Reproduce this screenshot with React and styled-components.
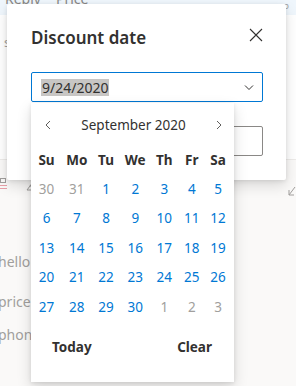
import React from 'react'
import styled, { createGlobalStyle } from 'styled-components'

const GlobalStyle = createGlobalStyle`
    html, body {
        margin: 0;
        padding: 0;
        background: #ffffff;
    }
    body {
        font-family: 'Noto Sans', 'Open Sans', sans-serif;
        color: #323130;
    }
`;

const Page = styled.div`
    position: relative;
    width: 296px;
    height: 386px;
    overflow: hidden;
    background: #ffffff;
`;

const TopBar = styled.div`
    height: 15px;
    background: #eff6fc;
    display: flex;
    justify-content: space-between;
    padding: 0 6px 0 5px;
    color: #8a8886;
    overflow: hidden;

    .left {
        display: flex;
        gap: 15px;
        font-size: 14px;
        line-height: 14px;
        margin-top: -8px;
    }
    .dots {
        margin-top: 1px;
        font-size: 9px;
        line-height: 9px;
        letter-spacing: 1px;
        color: #a19f9d;
    }
`;

const WhiteArea = styled.div`
    height: 145px;
    box-sizing: border-box;
    border-bottom: 1px solid #edebe9;
    color: #a19f9d;
    font-size: 13px;
    padding: 18px 0 0 4px;
`;

const GreyArea = styled.div`
    background: #faf9f8;
    height: 226px;
    padding-top: 12px;
    box-sizing: border-box;
`;

const ToolRow = styled.div`
    display: flex;
    justify-content: space-between;
    align-items: center;
    height: 24px;
`;

const ToolGroup = styled.div`
    display: flex;
    align-items: center;
    gap: 18px;
`;

const ListText = styled.div`
    font-size: 14px;
    color: #a19f9d;
    margin-left: -2px;
    height: 20px;
    line-height: 20px;
    margin-top: ${p => p.gap}px;
`;

const Dialog = styled.div`
    position: absolute;
    left: 7px;
    top: 4px;
    width: 279px;
    height: 176px;
    background: #ffffff;
    border-radius: 2px;
    box-shadow: 0 6px 14px rgba(0, 0, 0, 0.13), 0 1px 4px rgba(0, 0, 0, 0.1);
    padding: 19px 23px 0 24px;
    box-sizing: border-box;
`;

const DialogHeader = styled.div`
    display: flex;
    justify-content: space-between;
    align-items: center;
    height: 28px;
`;

const Title = styled.h1`
    margin: 0;
    font-size: 17px;
    font-weight: 600;
    color: #323130;
`;

const CloseButton = styled.button`
    border: none;
    background: none;
    padding: 0;
    width: 14px;
    height: 14px;
    display: flex;
    margin-top: -4px;
    color: #323130;
`;

const Field = styled.div`
    height: 30px;
    box-sizing: border-box;
    border: 1px solid ${p => (p.focused ? '#0078d4' : '#8a8886')};
    border-radius: 2px;
    margin-top: ${p => p.top}px;
    display: flex;
    align-items: center;
    justify-content: space-between;
    padding: 0 8px 0 9px;
    font-size: 14px;
`;

const Selected = styled.span`
    background: #c8c6c4;
    color: #323130;
    line-height: 17px;
    padding: 0 1px;
`;

const Callout = styled.div`
    position: absolute;
    left: 31px;
    top: 103px;
    width: 203px;
    height: 279px;
    background: #ffffff;
    box-shadow: 0 6px 14px rgba(0, 0, 0, 0.14), 0 1px 4px rgba(0, 0, 0, 0.1);
    box-sizing: border-box;
    padding-top: 11px;
`;

const MonthHeader = styled.div`
    display: flex;
    align-items: center;
    justify-content: space-between;
    height: 22px;
    padding: 0 10px 0 12px;
    font-size: 13.5px;
    color: #323130;
`;

const NavButton = styled.button`
    border: none;
    background: none;
    padding: 0;
    width: 10px;
    height: 12px;
    display: flex;
    align-items: center;
    justify-content: center;
    color: #605e5c;
`;

const Grid = styled.div`
    display: grid;
    grid-template-columns: 31px 29.5px 29px 29.5px 28.5px 26.5px 26px;
    grid-auto-rows: 29.4px;
    margin-top: 9px;
`;

const DayName = styled.div`
    display: flex;
    align-items: center;
    justify-content: center;
    font-size: 13.5px;
    font-weight: 700;
    color: #323130;
`;

const Day = styled.div`
    display: flex;
    align-items: center;
    justify-content: center;
    font-size: 13.5px;
    color: ${p => (p.outside ? '#a19f9d' : '#0078d4')};
`;

const Footer = styled.div`
    display: flex;
    justify-content: space-between;
    padding: 17px 22px 0 21px;
`;

const FooterButton = styled.button`
    border: none;
    background: none;
    padding: 0;
    font-family: inherit;
    font-size: 13.5px;
    font-weight: 700;
    color: #323130;
`;

const Chevron = ({ dir = 'down', size = 10 }) => {
    const paths = {
        down: 'M1 3.5 L5 7.5 L9 3.5',
        left: 'M7 1 L3 5 L7 9',
        right: 'M3 1 L7 5 L3 9'
    }
    return (
        <svg width={size} height={size} viewBox="0 0 10 10" fill="none">
            <path d={paths[dir]} stroke="currentColor" strokeWidth="1" />
        </svg>
    )
}

const names = ['Su', 'Mo', 'Tu', 'We', 'Th', 'Fr', 'Sa']

const days = [
    ...[30, 31].map(d => ({ d, outside: true })),
    ...Array.from({ length: 30 }, (_, i) => ({ d: i + 1 })),
    ...[1, 2, 3].map(d => ({ d, outside: true }))
]

export default function App() {
    return (
        <Page>
            <GlobalStyle />
            <TopBar>
                <div className="left">
                    <span>Reply</span>
                    <span>Price</span>
                </div>
                <div className="dots">ooo</div>
            </TopBar>
            <WhiteArea>s</WhiteArea>
            <GreyArea>
                <ToolRow>
                    <ToolGroup>
                        <svg width="8" height="14" viewBox="0 0 8 14" style={{ alignSelf: 'flex-start' }}>
                            <rect x="0.5" y="1.5" width="5" height="4" fill="none" stroke="#a19f9d" />
                            <path d="M0 8.5 H7 M0 11.5 H7" stroke="#e8a0a8" />
                        </svg>
                        <svg width="8" height="10" viewBox="0 0 8 10" style={{ alignSelf: 'flex-end' }}>
                            <path d="M7 1 L1 9 M1 9 H7 M4 4 L7 9" stroke="#a19f9d" fill="none" />
                        </svg>
                    </ToolGroup>
                    <svg width="8" height="10" viewBox="0 0 8 10" style={{ alignSelf: 'flex-end' }}>
                        <path d="M7 1 L1 9 M1 4 V9 H6" stroke="#a19f9d" fill="none" />
                    </svg>
                </ToolRow>
                <ListText gap={56}>hello</ListText>
                <ListText gap={20}>price</ListText>
                <ListText gap={13}>phone</ListText>
            </GreyArea>

            <Dialog>
                <DialogHeader>
                    <Title>Discount date</Title>
                    <CloseButton>
                        <svg width="14" height="14" viewBox="0 0 14 14">
                            <path d="M1 1 L13 13 M13 1 L1 13" stroke="#323130" strokeWidth="1.1" />
                        </svg>
                    </CloseButton>
                </DialogHeader>
                <Field focused top={21}>
                    <Selected>9/24/2020</Selected>
                    <Chevron />
                </Field>
                <Field top={24} />
            </Dialog>

            <Callout>
                <MonthHeader>
                    <NavButton><Chevron dir="left" /></NavButton>
                    <span>September 2020</span>
                    <NavButton><Chevron dir="right" /></NavButton>
                </MonthHeader>
                <Grid>
                    {names.map(n => <DayName key={n}>{n}</DayName>)}
                    {days.map((x, i) => (
                        <Day key={i} outside={x.outside}>{x.d}</Day>
                    ))}
                </Grid>
                <Footer>
                    <FooterButton>Today</FooterButton>
                    <FooterButton>Clear</FooterButton>
                </Footer>
            </Callout>
        </Page>
    )
}
